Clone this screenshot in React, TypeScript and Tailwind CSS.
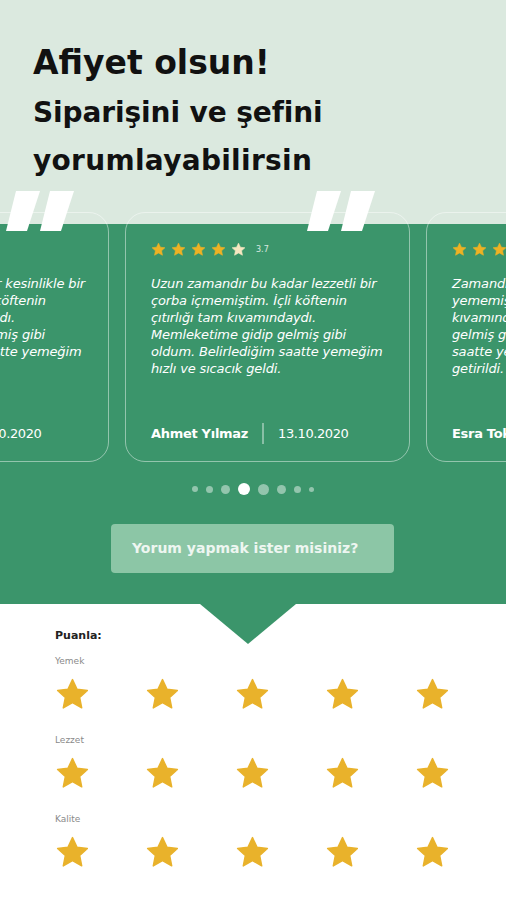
import React from "react";

const FONT = { fontFamily: "'DejaVu Sans', 'Open Sans', sans-serif" };

type Review = {
  lines: string[];
  name: string;
  date: string;
  rating: string;
};

const REVIEWS: Review[] = [
  {
    lines: [
      "Daha önce hiç bu kadar kesinlikle bir",
      "çorba içmemiştim. İçli köftenin",
      "çıtırlığı tam kıvamındaydı.",
      "Memleketime gidip gelmiş gibi",
      "oldum. Belirlediğim saatte yemeğim",
    ],
    name: "Zeynep Kaya",
    date: "12.10.2020",
    rating: "4.2",
  },
  {
    lines: [
      "Uzun zamandır bu kadar lezzetli bir",
      "çorba içmemiştim. İçli köftenin",
      "çıtırlığı tam kıvamındaydı.",
      "Memleketime gidip gelmiş gibi",
      "oldum. Belirlediğim saatte yemeğim",
      "hızlı ve sıcacık geldi.",
    ],
    name: "Ahmet Yılmaz",
    date: "13.10.2020",
    rating: "3.7",
  },
  {
    lines: [
      "Zamandır böyle güzel bir yemek",
      "yememiştim. Köfteler tam",
      "kıvamındaydı. Memleketime gidip",
      "gelmiş gibi oldum. Belirlediğim",
      "saatte yemeğim sıcacık",
      "getirildi.",
    ],
    name: "Esra Toksöz",
    date: "14.10.2020",
    rating: "4.5",
  },
];

function Star({ size, color }: { size: number; color: string }) {
  return (
    <svg width={size} height={size} viewBox="0 0 24 24">
      <path
        d="M12 1.8l3.05 6.55 7.15.85-5.28 4.9 1.4 7.07L12 17.6l-6.32 3.57 1.4-7.07-5.28-4.9 7.15-.85z"
        fill={color}
        stroke={color}
        strokeWidth="1"
        strokeLinejoin="round"
      />
    </svg>
  );
}

function QuoteMark() {
  return (
    <svg width="70" height="42" viewBox="0 0 70 42" className="absolute -top-[22px] left-[180px]">
      <polygon points="11,0 35,0 22,40 1,40" fill="#ffffff" />
      <polygon points="45,0 69,0 56,40 35,40" fill="#ffffff" />
    </svg>
  );
}

function ReviewCard({ r }: { r: Review }) {
  return (
    <div className="relative w-[285px] h-[250px] shrink-0 rounded-[20px] border border-white/45 px-[25px] pt-[29px] pb-[17px] flex flex-col">
      <QuoteMark />
      <div className="flex items-center gap-[5px]">
        {[0, 1, 2, 3].map((i) => (
          <Star key={i} size={15} color="#eeb224" />
        ))}
        <Star size={15} color="#f6e7c1" />
        <span className="ml-[5px] text-[8px] text-white/80">{r.rating}</span>
      </div>
      <div className="mt-[18px] text-[13px] leading-[17px] italic text-white tracking-[-0.15px]">
        {r.lines.map((l, i) => (
          <div key={i} className="whitespace-nowrap">
            {l}
          </div>
        ))}
      </div>
      <div className="mt-auto flex items-center text-[13px] text-white">
        <span className="font-bold whitespace-nowrap tracking-[-0.3px]">{r.name}</span>
        <span className="mx-[14px] h-[21px] w-[2px] bg-white/40" />
        <span className="whitespace-nowrap tracking-[-0.4px]">{r.date}</span>
      </div>
    </div>
  );
}

const DOTS = [
  { s: 6, o: "bg-white/45" },
  { s: 7, o: "bg-white/45" },
  { s: 9, o: "bg-white/45" },
  { s: 12, o: "bg-white" },
  { s: 11, o: "bg-white/45" },
  { s: 9, o: "bg-white/45" },
  { s: 7, o: "bg-white/45" },
  { s: 5, o: "bg-white/45" },
];

function RatingRow({ label }: { label: string }) {
  return (
    <div>
      <div className="text-[9px] leading-[12px] text-[#8a8a8a]">{label}</div>
      <div className="mt-[10px] flex gap-[55px]">
        {[0, 1, 2, 3, 4].map((i) => (
          <Star key={i} size={35} color="#e9b22b" />
        ))}
      </div>
    </div>
  );
}

export default function App() {
  return (
    <div className="w-[506px] h-[900px] overflow-hidden bg-white" style={FONT}>
      {/* Heading */}
      <div className="h-[224px] bg-[#dbe9df] pl-[33px] pt-[40px] text-[#111111]">
        <h1 className="text-[33px] leading-[46px] font-bold">Afiyet olsun!</h1>
        <p className="mt-[3px] text-[28px] leading-[48px] font-bold tracking-[-0.1px]">
          Siparişini ve şefini
        </p>
        <p className="text-[28px] leading-[48px] font-bold tracking-[0.3px]">yorumlayabilirsin</p>
      </div>

      {/* Reviews */}
      <div className="relative h-[380px] bg-[#3b956b] flex flex-col">
        <div className="-mt-[12px] flex gap-[16px] translate-x-[-176px]">
          {REVIEWS.map((r, i) => (
            <ReviewCard key={i} r={r} />
          ))}
        </div>

        <div className="mt-[21px] flex items-center justify-center gap-[8px]">
          {DOTS.map((d, i) => (
            <span
              key={i}
              className={`rounded-full ${d.o}`}
              style={{ width: d.s, height: d.s }}
            />
          ))}
        </div>

        <div className="mt-[29px] ml-[111px] w-[283px] h-[49px] rounded-[4px] bg-[#8cc6a6] flex items-center pl-[21px] text-[14px] font-bold text-[#eef6f1]">
          Yorum yapmak ister misiniz?
        </div>
      </div>

      {/* Rating */}
      <div className="relative pl-[55px] pt-[25px]">
        <svg width="96" height="41" viewBox="0 0 96 41" className="absolute top-0 left-[200px]">
          <polygon points="0,0 96,0 48,40" fill="#3b956b" />
        </svg>
        <div className="text-[11px] leading-[14px] font-bold text-[#222222]">Puanla:</div>
        <div className="mt-[12px] flex flex-col gap-[22px]">
          <RatingRow label="Yemek" />
          <RatingRow label="Lezzet" />
          <RatingRow label="Kalite" />
        </div>
      </div>
    </div>
  );
}
